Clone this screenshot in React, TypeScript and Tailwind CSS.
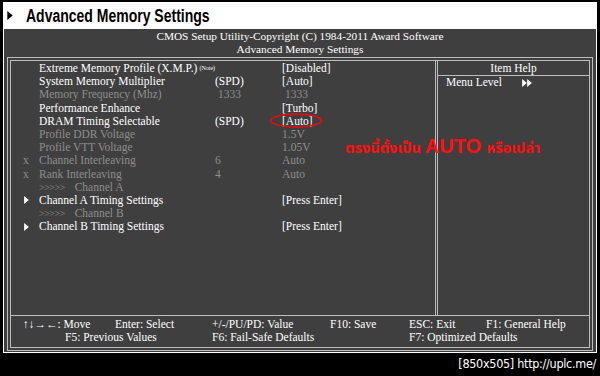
import React from "react";

type Row = {
  mark?: "x" | "arrow";
  label: string;
  note?: boolean;
  c2?: string;
  c3?: string;
  dim?: boolean;
  circle?: boolean;
  sub?: boolean;
};

const rows: Row[] = [
  { label: "Extreme Memory Profile (X.M.P.)", note: true, c3: "[Disabled]" },
  { label: "System Memory Multiplier", c2: "(SPD)", c3: "[Auto]" },
  { label: "Memory Frequency (Mhz)", c2: "\u00a01333", c3: "\u00a01333", dim: true },
  { label: "Performance Enhance", c3: "[Turbo]" },
  { label: "DRAM Timing Selectable", c2: "(SPD)", c3: "[Auto]", circle: true },
  { label: "Profile DDR Voltage", c3: "1.5V", dim: true },
  { label: "Profile VTT Voltage", c3: "1.05V", dim: true },
  { mark: "x", label: "Channel Interleaving", c2: "6", c3: "Auto", dim: true },
  { mark: "x", label: "Rank Interleaving", c2: "4", c3: "Auto", dim: true },
  { label: "Channel A", sub: true, dim: true },
  { mark: "arrow", label: "Channel A Timing Settings", c3: "[Press Enter]" },
  { label: "Channel B", sub: true, dim: true },
  { mark: "arrow", label: "Channel B Timing Settings", c3: "[Press Enter]" },
];

function Tri({ className }: { className?: string }) {
  return (
    <svg viewBox="0 0 6 10" className={className}>
      <polygon points="0,0 6,5 0,10" fill="currentColor" />
    </svg>
  );
}

function SettingRow({ row }: { row: Row }) {
  const color = row.dim ? "text-[#8e8e8e]" : "text-white";
  return (
    <div className={`flex h-[13.2px] items-center leading-[13px] ${color}`}>
      <div className="w-[16px] flex items-center">
        {row.mark === "x" && <span className="text-[#8e8e8e]">x</span>}
        {row.mark === "arrow" && <Tri className="w-[5px] h-[8px] ml-[1px] text-white" />}
      </div>
      <div className="w-[176px] whitespace-nowrap">
        {row.sub ? (
          <span>
            <span className="tracking-[-0.5px] text-[10px]">&gt;&gt;&gt;&gt;&gt;</span>
            <span className="ml-[10px]">{row.label}</span>
          </span>
        ) : (
          row.label
        )}
        {row.note && <sup className="text-[6px] ml-[2px] relative -top-[2px]">(Note)</sup>}
      </div>
      <div className="w-[67px] whitespace-nowrap">{row.c2}</div>
      <div className="relative whitespace-nowrap">
        {row.c3}
        {row.circle && (
          <svg
            viewBox="0 0 60 18"
            className="absolute left-[-14px] top-[-3px] w-[58px] h-[17px]"
          >
            <ellipse cx="29" cy="9" rx="27" ry="6.8" fill="none" stroke="#e01010" strokeWidth="1.8" />
          </svg>
        )}
      </div>
    </div>
  );
}

export default function App() {
  return (
    <div className="w-[600px] h-[376px] bg-black flex flex-col overflow-hidden font-['Liberation_Serif','Times_New_Roman',serif]">
      <div className="mt-[2px] ml-[3px] w-[594px] bg-white px-[1px] pb-[1px]">
        <div className="h-[27px] flex items-center">
          <Tri className="w-[6px] h-[9px] ml-[3px] text-black" />
          <span className="ml-[13px] mt-[1px] text-[17.5px] font-bold text-black font-['Liberation_Sans','Arial',sans-serif] scale-x-[0.8] origin-left whitespace-nowrap">
            Advanced Memory Settings
          </span>
        </div>

        <div className="h-[323px] bg-[#3f3f3f] pt-[1px] relative">
          <div className="text-white text-[11.3px] leading-[13px] text-center">
            <div>CMOS Setup Utility-Copyright (C) 1984-2011 Award Software</div>
            <div>Advanced Memory Settings</div>
          </div>

          <div className="mt-[1px] ml-[3px] w-[586px] h-[294px] border border-[#bdbdbd] p-[2px]">
            <div className="h-full border border-[#bdbdbd] flex flex-col text-[11.5px]">
              <div className="flex flex-1">
                <div className="w-[424px] pt-[1px] pl-[12px]">
                  {rows.map((r, i) => (
                    <SettingRow key={i} row={r} />
                  ))}
                </div>
                <div className="w-[3px] border-x border-[#bdbdbd]" />
                <div className="flex-1 text-white">
                  <div className="h-[14px] leading-[13px] text-center border-b border-[#bdbdbd] mt-[1px]">
                    Item Help
                  </div>
                  <div className="flex items-center leading-[13px] pl-[8px]">
                    <span>Menu Level</span>
                    <span className="ml-[20px] flex">
                      <Tri className="w-[5px] h-[8px]" />
                      <Tri className="w-[5px] h-[8px]" />
                    </span>
                  </div>
                </div>
              </div>

              <div className="border-t border-[#bdbdbd] text-white leading-[13px] pt-[2px] pb-[3px]">
                <div className="flex pl-[12px] whitespace-nowrap">
                  <span className="w-[92px]">↑↓→←: Move</span>
                  <span className="w-[97px]">Enter: Select</span>
                  <span className="w-[118px]">+/-/PU/PD: Value</span>
                  <span className="w-[79px]">F10: Save</span>
                  <span className="w-[77px]">ESC: Exit</span>
                  <span>F1: General Help</span>
                </div>
                <div className="flex pl-[54px] whitespace-nowrap">
                  <span className="w-[147px]">F5: Previous Values</span>
                  <span className="w-[197px]">F6: Fail-Safe Defaults</span>
                  <span>F7: Optimized Defaults</span>
                </div>
              </div>
            </div>
          </div>

          <div className="absolute left-[341px] top-[102px] flex items-baseline text-[#ff1010] font-bold font-['Noto_Sans_Thai','Tahoma','Noto_Sans',sans-serif] whitespace-nowrap">
            <span className="text-[14.5px]">ตรงนี้ตั้งเป็น</span>
            <span className="text-[20px] ml-[4px] font-['Liberation_Sans','Arial',sans-serif]">AUTO</span>
            <span className="text-[14.5px] ml-[5px]">หรือเปล่า</span>
          </div>
        </div>
      </div>

      <div className="flex-1 flex justify-end items-center pr-[4px] text-white text-[12.5px] font-['DejaVu_Sans_Condensed',sans-serif] tracking-[-0.3px]">
        [850x505] http://uplc.me/
      </div>
    </div>
  );
}
